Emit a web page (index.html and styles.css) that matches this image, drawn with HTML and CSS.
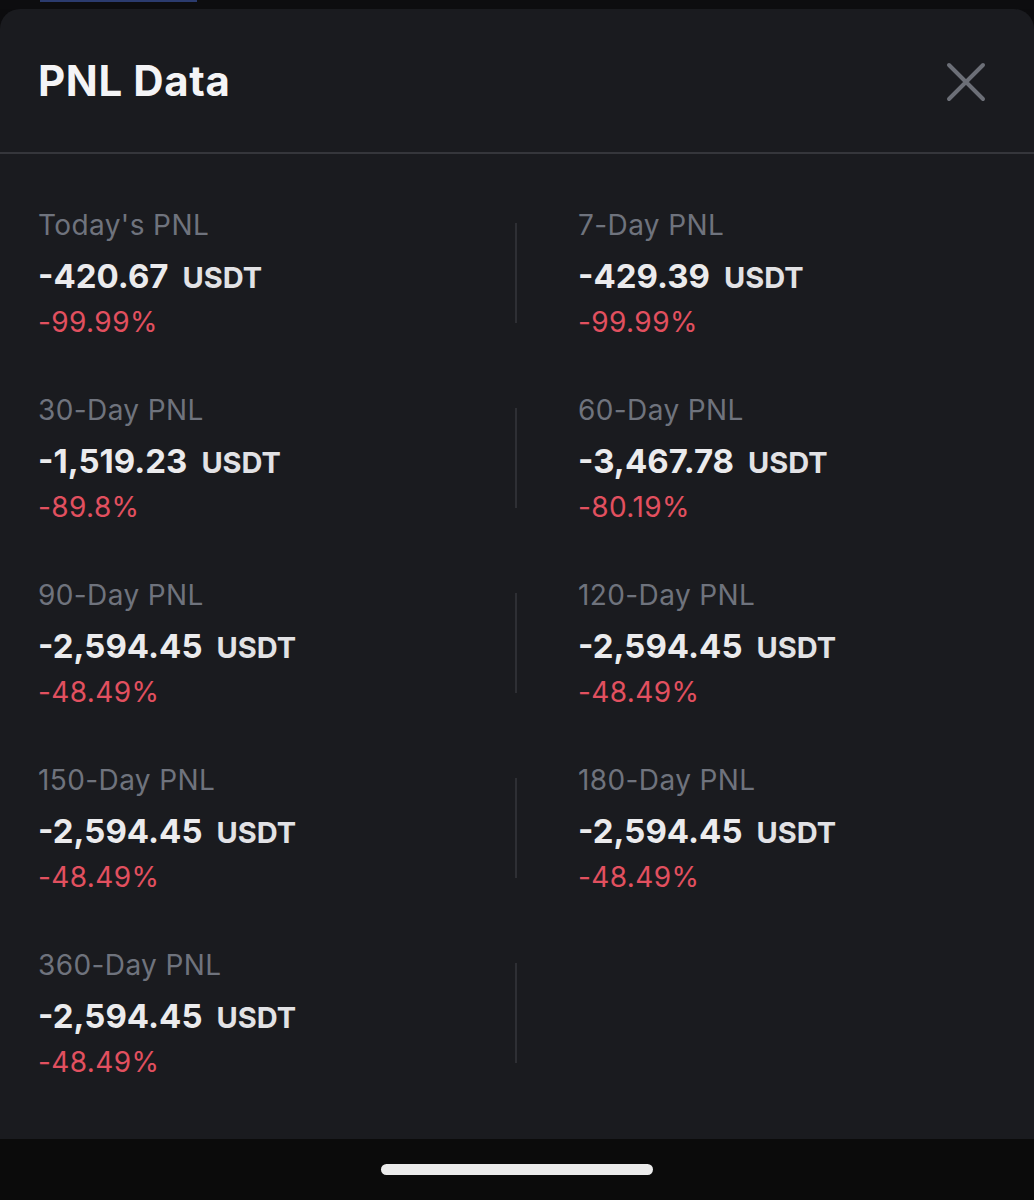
FILE: index.html
```html
<!DOCTYPE html>
<html lang="en">
<head>
    <meta charset="UTF-8">
    <meta name="viewport" content="width=device-width, initial-scale=1.0">
    <title>PNL Data</title>
    <link rel="stylesheet" href="styles.css">
</head>
<body>
    <div class="screen">
        <div class="top-strip">
            <div class="tab-indicator"></div>
        </div>

        <div class="sheet">
            <div class="sheet-header">
                <h1>PNL Data</h1>
                <svg class="close" width="40" height="40" viewBox="0 0 40 40">
                    <path d="M3 3 L37 37 M37 3 L3 37" stroke="#6c6f77" stroke-width="4" stroke-linecap="round" fill="none"/>
                </svg>
            </div>

            <div class="pnl-grid">
                <div class="pnl-cell">
                    <div class="label">Today's PNL</div>
                    <div class="value">-420.67<span class="unit">USDT</span></div>
                    <div class="pct">-99.99%</div>
                </div>
                <div class="divider"></div>
                <div class="pnl-cell right">
                    <div class="label">7-Day PNL</div>
                    <div class="value">-429.39<span class="unit">USDT</span></div>
                    <div class="pct">-99.99%</div>
                </div>

                <div class="pnl-cell">
                    <div class="label">30-Day PNL</div>
                    <div class="value">-1,519.23<span class="unit">USDT</span></div>
                    <div class="pct">-89.8%</div>
                </div>
                <div class="divider"></div>
                <div class="pnl-cell right">
                    <div class="label">60-Day PNL</div>
                    <div class="value">-3,467.78<span class="unit">USDT</span></div>
                    <div class="pct">-80.19%</div>
                </div>

                <div class="pnl-cell">
                    <div class="label">90-Day PNL</div>
                    <div class="value">-2,594.45<span class="unit">USDT</span></div>
                    <div class="pct">-48.49%</div>
                </div>
                <div class="divider"></div>
                <div class="pnl-cell right">
                    <div class="label">120-Day PNL</div>
                    <div class="value">-2,594.45<span class="unit">USDT</span></div>
                    <div class="pct">-48.49%</div>
                </div>

                <div class="pnl-cell">
                    <div class="label">150-Day PNL</div>
                    <div class="value">-2,594.45<span class="unit">USDT</span></div>
                    <div class="pct">-48.49%</div>
                </div>
                <div class="divider"></div>
                <div class="pnl-cell right">
                    <div class="label">180-Day PNL</div>
                    <div class="value">-2,594.45<span class="unit">USDT</span></div>
                    <div class="pct">-48.49%</div>
                </div>

                <div class="pnl-cell">
                    <div class="label">360-Day PNL</div>
                    <div class="value">-2,594.45<span class="unit">USDT</span></div>
                    <div class="pct">-48.49%</div>
                </div>
                <div class="divider"></div>
                <div class="pnl-cell right"></div>
            </div>
        </div>

        <div class="home-bar">
            <div class="home-indicator"></div>
        </div>
    </div>
</body>
</html>
```

FILE: styles.css
```css
body {
    margin: 0;
    background-color: #0c0c0e;
    font-family: 'Inter', 'Noto Sans', sans-serif;
    color: #eaeaec;
}

.screen {
    height: 1200px;
    display: flex;
    flex-direction: column;
}

.top-strip {
    height: 9px;
    background-color: #0d0d0f;
}

.tab-indicator {
    width: 157px;
    height: 2px;
    margin-left: 40px;
    background-color: #2b3b6e;
}

.sheet {
    flex: 1;
    background-color: #1a1b1f;
    border-radius: 20px 20px 0 0;
    display: flex;
    flex-direction: column;
}

.sheet-header {
    height: 143px;
    padding: 0 48px 0 38px;
    display: flex;
    align-items: center;
    justify-content: space-between;
    border-bottom: 2px solid #35363b;
}

h1 {
    margin: 0;
    font-size: 42px;
    font-weight: 700;
    color: #f4f4f6;
    letter-spacing: 0.6px;
}

.close {
    display: block;
    margin-top: 2px;
}

.pnl-grid {
    display: grid;
    grid-template-columns: 477px 2px 1fr;
    row-gap: 53px;
    padding: 51px 0 0 38px;
}

.pnl-cell.right {
    padding-left: 61px;
}

.divider {
    height: 100px;
    margin-top: 18px;
    background-color: #2e2f34;
}

.label {
    font-size: 28px;
    line-height: 40px;
    color: #6f737d;
    letter-spacing: 0.4px;
}

.value {
    font-size: 33px;
    line-height: 62px;
    font-weight: 700;
    color: #ebebed;
}

.unit {
    font-size: 29px;
    line-height: 1;
    font-weight: 700;
    margin-left: 14px;
    color: #e2e2e5;
}

.pct {
    font-size: 28px;
    line-height: 30px;
    color: #e2505f;
    letter-spacing: 0.4px;
}

.home-bar {
    height: 61px;
    background-color: #0b0b0b;
    display: flex;
    justify-content: center;
    padding-top: 25px;
    box-sizing: border-box;
}

.home-indicator {
    width: 272px;
    height: 11px;
    border-radius: 6px;
    background-color: #ececec;
}
```
